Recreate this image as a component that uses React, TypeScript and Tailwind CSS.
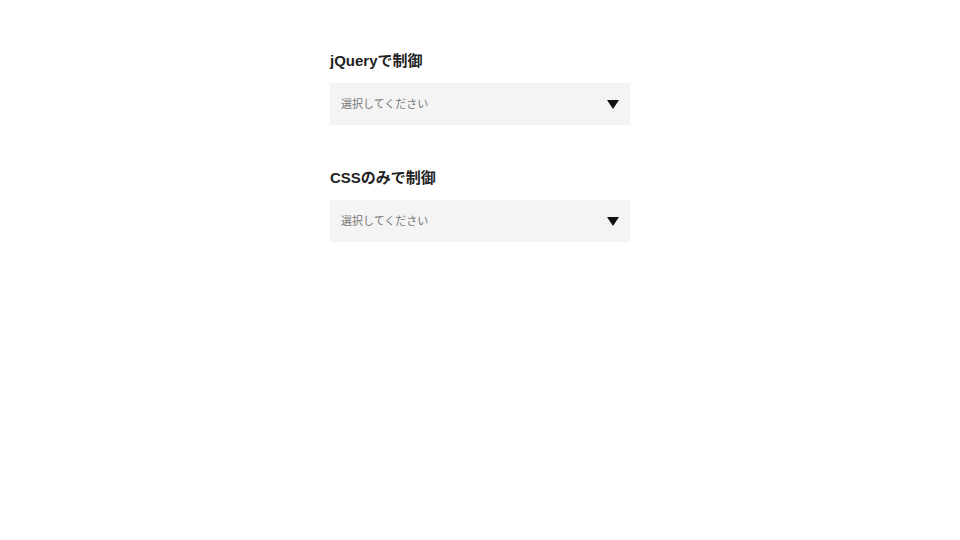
export default function App() {
  const font = { fontFamily: '"Liberation Sans", "Noto Sans CJK JP", sans-serif' };
  const Section = ({ title }: { title: string }) => (
    <div className="flex flex-col">
      <h2 className="text-[15px] font-bold leading-[24px] text-[#222]">{title}</h2>
      <div className="mt-[10px] h-[42px] w-[300px] bg-[#f4f4f4] flex items-center justify-between pl-[11px] pr-[11px]">
        <span className="text-[11px] leading-[16px] text-[#777]">選択してください</span>
        <svg width="12" height="9" viewBox="0 0 12 9"><polygon points="0,0 12,0 6,9" fill="#111" /></svg>
      </div>
    </div>
  );
  return (
    <div className="min-h-[540px] bg-white flex justify-center" style={font}>
      <div className="w-[300px] pt-[49px] flex flex-col gap-[41px]">
        <Section title="jQueryで制御" />
        <Section title="CSSのみで制御" />
      </div>
    </div>
  );
}
